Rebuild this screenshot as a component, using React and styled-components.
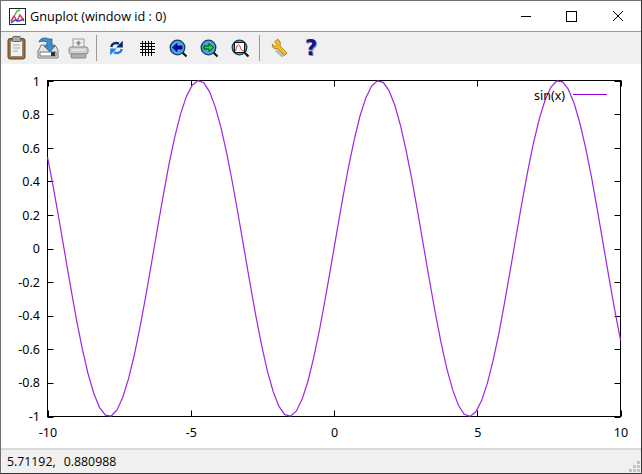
import React from 'react'
import styled, { createGlobalStyle } from 'styled-components'

const GlobalStyle = createGlobalStyle`
  html, body { margin: 0; padding: 0; overflow: hidden; background: #fff; }
  #root { width: 642px; height: 474px; }
`

const PLOT = { left: 47.5, right: 620.5, top: 80.5, bottom: 416.5 }
const TICK = 6
const sx = (x) => PLOT.left + ((x + 10) / 20) * (PLOT.right - PLOT.left)
const sy = (y) => PLOT.bottom - ((y + 1) / 2) * (PLOT.bottom - PLOT.top)

const curve = Array.from({ length: 100 }, (_, i) => {
  const x = -10 + (20 * i) / 99
  return `${sx(x).toFixed(1)},${sy(Math.sin(x)).toFixed(1)}`
}).join(' ')

const yTicks = ['1', '0.8', '0.6', '0.4', '0.2', '0', '-0.2', '-0.4', '-0.6', '-0.8', '-1']
const xTicks = [-10, -5, 0, 5, 10]

const tickPath = [
  ...yTicks.map((_, i) => {
    const y = Math.round(PLOT.top + i * 33.6) + 0.5
    return `M${PLOT.left} ${y}h${TICK}M${PLOT.right} ${y}h-${TICK}`
  }),
  ...xTicks.map((t) => {
    const x = Math.round(sx(t)) + 0.5
    return `M${x} ${PLOT.top}v${TICK}M${x} ${PLOT.bottom}v-${TICK}`
  }),
].join('')

export default function App() {
  return (
    <>
      <GlobalStyle />
      <Window>
        <TitleBar>
          <AppIcon />
          <Title>Gnuplot (window id : 0)</Title>
          <Caption>
            <svg width="46" height="16" viewBox="0 0 46 16"><path d="M18 8.500h10" stroke="#000" /></svg>
            <svg width="46" height="16" viewBox="0 0 46 16"><rect x="17.500" y="3.500" width="10" height="10" fill="none" stroke="#000" /></svg>
            <svg width="46" height="16" viewBox="0 0 46 16"><path d="M18 3l10 10M28 3L18 13" stroke="#000" /></svg>
          </Caption>
        </TitleBar>
        <Toolbar>
          <ToolSlot><Clipboard /></ToolSlot>
          <ToolSlot><SaveIcon /></ToolSlot>
          <ToolSlot><PrintIcon /></ToolSlot>
          <Separator $left={2} />
          <ToolSlot><RefreshIcon /></ToolSlot>
          <ToolSlot><GridIcon /></ToolSlot>
          <ToolSlot><Lens><path d="M3.500 8.500l4.500-4v2.500h5v3H8v2.500z" fill="#0000d8" stroke="#000" strokeWidth=".7" /></Lens></ToolSlot>
          <ToolSlot><Lens><path d="M13.500 8.500l-4.500-4v2.500H4v3h5v2.500z" fill="#10e818" stroke="#000" strokeWidth=".7" /></Lens></ToolSlot>
          <ToolSlot><Lens><rect x="3.500" y="3.500" width="10" height="10" fill="#fff" stroke="#111" /><path d="M4.500 12C6 5 8 4.500 9 7.500s1.500 4.500 4 4.500" fill="none" stroke="#d83030" /></Lens></ToolSlot>
          <Separator $left={3} />
          <ToolSlot><WrenchIcon /></ToolSlot>
          <ToolSlot><HelpGlyph>?</HelpGlyph></ToolSlot>
        </Toolbar>
        <PlotArea>
          <svg width="640" height="384" viewBox="1 64 640 384">
            <rect x={PLOT.left} y={PLOT.top} width={PLOT.right - PLOT.left} height={PLOT.bottom - PLOT.top} fill="none" stroke="#000" />
            <path d={tickPath} fill="none" stroke="#000" />
            <polyline points={curve} fill="none" stroke="#a024e0" strokeWidth="1.200" />
            <line x1="573" x2="607" y1="94.500" y2="94.500" stroke="#9400d3" />
            <TickText x="565" y="100" textAnchor="end">sin(x)</TickText>
            {yTicks.map((t, i) => (
              <TickText key={t} x="40" y={85.500 + i * 33.5} textAnchor="end">{t}</TickText>
            ))}
            {xTicks.map((t) => (
              <TickText key={t} x={sx(t) + 0.5} y="437" textAnchor="middle">{t}</TickText>
            ))}
          </svg>
        </PlotArea>
        <StatusBar>
          <span>5.71192, 0.880988</span>
          <Grip viewBox="0 0 12 12" width="12" height="12">
            {[[8, 0], [4, 4], [8, 4], [0, 8], [4, 8], [8, 8]].map(([x, y]) => (
              <rect key={`${x}-${y}`} x={x} y={y} width="3" height="3" fill="#c4c4c4" />
            ))}
          </Grip>
        </StatusBar>
      </Window>
    </>
  )
}

const AppIcon = () => (
  <svg width="17" height="17" viewBox="0 0 17 17">
    <rect x=".5" y=".5" width="16" height="16" fill="#fff" stroke="#222" />
    <path d="M2 14L8 3l3-1" fill="none" stroke="#30c040" strokeWidth="1.400" />
    <path d="M2 13l3-5 3 5 3-6 4 6" fill="none" stroke="#e83048" strokeWidth="1.400" />
    <path d="M2 15l4-3 4 1 5-2" fill="none" stroke="#3040e8" strokeWidth="1.400" />
  </svg>
)

const Clipboard = () => (
  <svg width="20" height="24" viewBox="0 0 20 24">
    <rect x="1" y="2.500" width="17" height="20.500" rx="2" fill="#a86a2a" stroke="#6e4214" />
    <rect x="3.500" y="5" width="12" height="15.500" fill="#f2f2ec" stroke="#8a8a84" />
    <path d="M6 9h7M6 12h7M6 15h5" stroke="#a8a8a0" />
    <rect x="5.500" y=".5" width="8" height="5" rx="1" fill="#a8a8a8" stroke="#666" />
  </svg>
)

const SaveIcon = () => (
  <svg width="24" height="24" viewBox="0 0 24 24">
    <path d="M3 14l2-5h14l3 5v8H2v-8z" fill="#e4e4e4" stroke="#7a7a7a" />
    <rect x="4" y="16" width="16" height="4" fill="#fff" stroke="#555" strokeWidth=".8" />
    <rect x="15" y="16" width="4" height="4" fill="#333" />
    <path d="M3 6c1-4 6-5 10-3h3v7h3l-5 6-6-6h3V6C9 5 5 5 3 6z" fill="#3f8fd0" stroke="#1d5a96" strokeWidth=".8" />
  </svg>
)

const PrintIcon = () => (
  <svg width="21" height="21" viewBox="0 0 21 21">
    <rect x="5" y="1" width="11" height="9" fill="#efefef" stroke="#999" />
    <path d="M10.500 2.500l3 3h-2v2h-2v-2h-2z" fill="#888" />
    <rect x="1" y="9" width="19" height="7" rx="2" fill="#cfcfcf" stroke="#888" />
    <rect x="3" y="16" width="15" height="4" rx="1" fill="#b0b0b0" stroke="#888" />
    <path d="M4 12h13" stroke="#f4f4f4" />
  </svg>
)

const RefreshIcon = () => (
  <svg width="15" height="16" viewBox="0 0 15 16">
    <path d="M2.200 7C2.800 3.500 6.500 2 10 3.800" fill="none" stroke="#062a74" strokeWidth="2.400" />
    <path d="M13.800 .8V7.500H7.200z" fill="#062a74" />
    <path d="M12.800 9C12.200 12.500 8.500 14 5 12.200" fill="none" stroke="#1a80ea" strokeWidth="2.400" />
    <path d="M1.200 15.200V8.500h6.600z" fill="#1a80ea" />
  </svg>
)

const GridIcon = () => (
  <svg width="15" height="15" viewBox="0 0 15 15">
    <path d="M0 2.500h15M0 5.500h15M0 8.500h15M0 11.500h15M2.500 0v15M5.500 0v15M8.500 0v15M11.500 0v15" stroke="#000" />
  </svg>
)

const Lens = ({ children }) => (
  <svg width="19" height="19" viewBox="0 0 19 19">
    <path d="M13.500 13.500l4 4" stroke="#111" strokeWidth="2.200" />
    <circle cx="8.500" cy="8.500" r="7.300" fill="#48a4e0" stroke="#123c60" strokeWidth="1.300" />
    {children}
  </svg>
)

const WrenchIcon = () => (
  <svg width="18" height="18" viewBox="0 0 18 18">
    <path d="M5 11l7 6.500" stroke="#777" strokeWidth="3" opacity=".45" />
    <path d="M6 .5L3.500 3l2.500 2.500L4 7.500 1.500 5C.5 8 3 10.500 6.500 9.500l7 7 2.500-2.500-7-7C10 3 8.500 .5 6 .5z" fill="#f8bc18" stroke="#8a6008" strokeWidth=".7" />
  </svg>
)

const Window = styled.div`
  width: 642px;
  height: 474px;
  box-sizing: border-box;
  border: 1px solid #6f6f6f;
  border-right-color: #333;
  border-bottom-color: #333;
  display: flex;
  flex-direction: column;
  background: #fff;
  overflow: hidden;
`

const TitleBar = styled.div`
  height: 30px;
  flex: none;
  display: flex;
  align-items: center;
  gap: 4px;
  padding-left: 8px;
  border-bottom: 1px solid #999;
`

const Title = styled.span`
  font: 12.700px "Open Sans", "Liberation Sans", sans-serif;
  color: #000;
`

const Caption = styled.div`
  margin-left: auto;
  display: flex;
  svg { display: block; }
`

const Toolbar = styled.div`
  height: 32px;
  flex: none;
  background: #f0f0f0;
  display: flex;
  align-items: center;
`

const ToolSlot = styled.div`
  width: 31px;
  height: 32px;
  display: flex;
  align-items: center;
  justify-content: center;
`

const Separator = styled.div`
  width: 1px;
  height: 26px;
  background: #999;
  margin: 0 4px 0 ${(p) => p.$left}px;
`

const PlotArea = styled.div`
  flex: 1;
  min-height: 0;
  background: #fff;
  svg { display: block; }
`

const TickText = styled.text`
  font: 12.500px "Noto Sans", "Liberation Sans", sans-serif;
  fill: #000;
`

const StatusBar = styled.div`
  height: 25px;
  flex: none;
  box-sizing: border-box;
  border-top: 2px solid #d8d8d8;
  background: #f0f0f0;
  display: flex;
  align-items: center;
  justify-content: space-between;
  padding-left: 6px;
  font: 12.300px "Open Sans", "Liberation Sans", sans-serif;
  word-spacing: 5px;
  color: #000;
`

const Grip = styled.svg`
  align-self: flex-end;
`

const HelpGlyph = styled.span`
  margin-left: 1px;
  font: bold 21px "DejaVu Sans", sans-serif;
  color: #14148c;
  text-shadow: 1px 1px 0 #8a8ab0;
`
